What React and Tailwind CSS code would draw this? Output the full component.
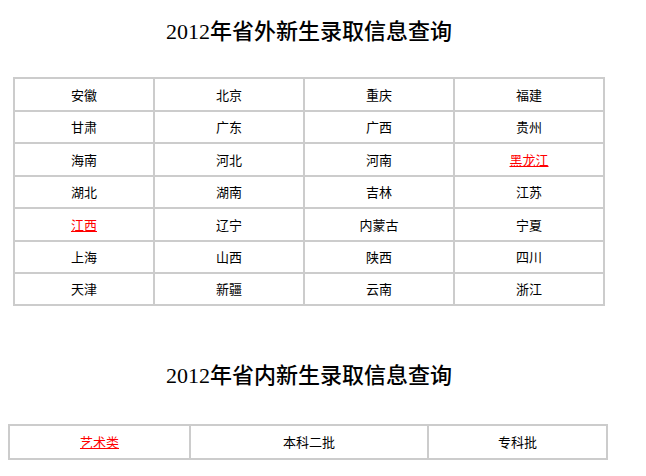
export default function App() {
  const rows = [
    ["安徽", "北京", "重庆", "福建"],
    ["甘肃", "广东", "广西", "贵州"],
    ["海南", "河北", "河南", "黑龙江"],
    ["湖北", "湖南", "吉林", "江苏"],
    ["江西", "辽宁", "内蒙古", "宁夏"],
    ["上海", "山西", "陕西", "四川"],
    ["天津", "新疆", "云南", "浙江"],
  ];
  const links = new Set(["黑龙江", "江西"]);
  const heights = ["h-[31px]", "h-[30px]", "h-[31px]", "h-[30px]", "h-[31px]", "h-[30px]", "h-[30px]"];
  const sans = { fontFamily: '"Noto Sans CJK SC", sans-serif' };
  const serif = { fontFamily: '"Liberation Serif", "Noto Sans CJK SC", serif' };
  return (
    <div className="w-[646px] h-[476px] bg-white overflow-hidden">
      <div className="w-[618px] flex flex-col">
        <h2
          className="mt-[20px] h-[24px] leading-[24px] text-[22px] font-medium text-black text-center"
          style={serif}
        >
          2012年省外新生录取信息查询
        </h2>
        <div className="mt-[33px] ml-[13px] self-start bg-[#cccccc] p-[2px] grid grid-cols-[138px_148px_148px_148px] gap-[2px]">
          {rows.map((r, i) =>
            r.map((c) => (
              <div
                key={c}
                className={`${heights[i]} bg-white flex items-center justify-center text-[13px]`}
                style={sans}
              >
                {links.has(c) ? (
                  <a href="#" className="text-[#ff0000] underline">{c}</a>
                ) : (
                  <span className="text-black">{c}</span>
                )}
              </div>
            ))
          )}
        </div>
        <h2
          className="mt-[58px] h-[24px] leading-[24px] text-[22px] font-medium text-black text-center"
          style={serif}
        >
          2012年省内新生录取信息查询
        </h2>
        <div className="mt-[36px] ml-[8px] self-start bg-[#cccccc] p-[2px] grid grid-cols-[179px_236px_177px] gap-[2px]">
          <div className="h-[32px] bg-white flex items-center justify-center text-[13px]" style={sans}>
            <a href="#" className="text-[#ff0000] underline">艺术类</a>
          </div>
          <div className="h-[32px] bg-white flex items-center justify-center text-[13px] text-black" style={sans}>
            本科二批
          </div>
          <div className="h-[32px] bg-white flex items-center justify-center text-[13px] text-black" style={sans}>
            专科批
          </div>
        </div>
      </div>
    </div>
  );
}
